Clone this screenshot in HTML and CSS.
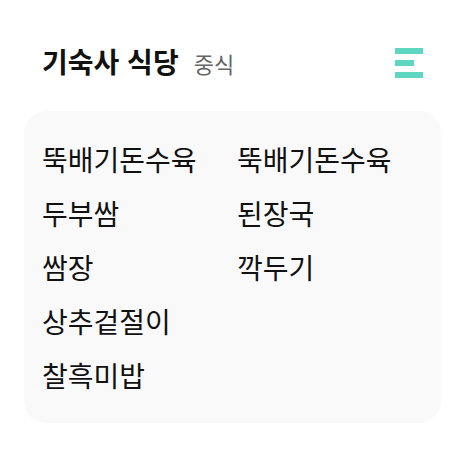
FILE: index.html
```html
<!DOCTYPE html>
<html lang="ko">
<head>
<meta charset="utf-8">
<link rel="stylesheet" href="styles.css">
</head>
<body>
<div class="page">
  <header class="header">
    <div class="title-group">
      <h1 class="title">기숙사 식당</h1>
      <span class="meal">중식</span>
    </div>
    <div class="menu-icon" aria-label="메뉴">
      <span class="bar"></span>
      <span class="bar short"></span>
      <span class="bar"></span>
    </div>
  </header>
  <section class="card">
    <ul class="menu-list">
      <li>뚝배기돈수육</li>
      <li>뚝배기돈수육</li>
      <li>두부쌈</li>
      <li>된장국</li>
      <li>쌈장</li>
      <li>깍두기</li>
      <li>상추겉절이</li>
      <li></li>
      <li>찰흑미밥</li>
    </ul>
  </section>
</div>
</body>
</html>
```

FILE: styles.css
```css
* { box-sizing: border-box; }
html, body { margin: 0; padding: 0; background: #ffffff; }
body {
  font-family: "Noto Sans CJK KR", "Noto Sans", sans-serif;
  color: #111111;
}
.page {
  width: 465px;
  padding: 40px 24px 0;
}
.header {
  display: flex;
  align-items: center;
  justify-content: space-between;
  padding: 0 18px 0 18px;
  height: 46px;
}
.title-group {
  display: flex;
  align-items: baseline;
  gap: 15px;
  padding-bottom: 5px;
}
.title {
  margin: 0;
  font-size: 28px;
  font-weight: 700;
  line-height: 1;
  color: #111111;
}
.meal {
  font-size: 22px;
  color: #666666;
  line-height: 1;
}
.menu-icon {
  display: flex;
  flex-direction: column;
  gap: 6px;
  width: 28px;
}
.bar {
  display: block;
  height: 6px;
  width: 28px;
  background: #5fd6c2;
}
.bar.short { width: 19px; }
.card {
  margin-top: 25px;
  background: #f9f9f9;
  border-radius: 22px;
  height: 312px;
  padding: 21px 18px;
}
.menu-list {
  list-style: none;
  margin: 0;
  padding: 0;
  display: grid;
  grid-template-columns: 195px 1fr;
}
.menu-list li {
  font-size: 28px;
  line-height: 54px;
  height: 54px;
  white-space: nowrap;
}
```
